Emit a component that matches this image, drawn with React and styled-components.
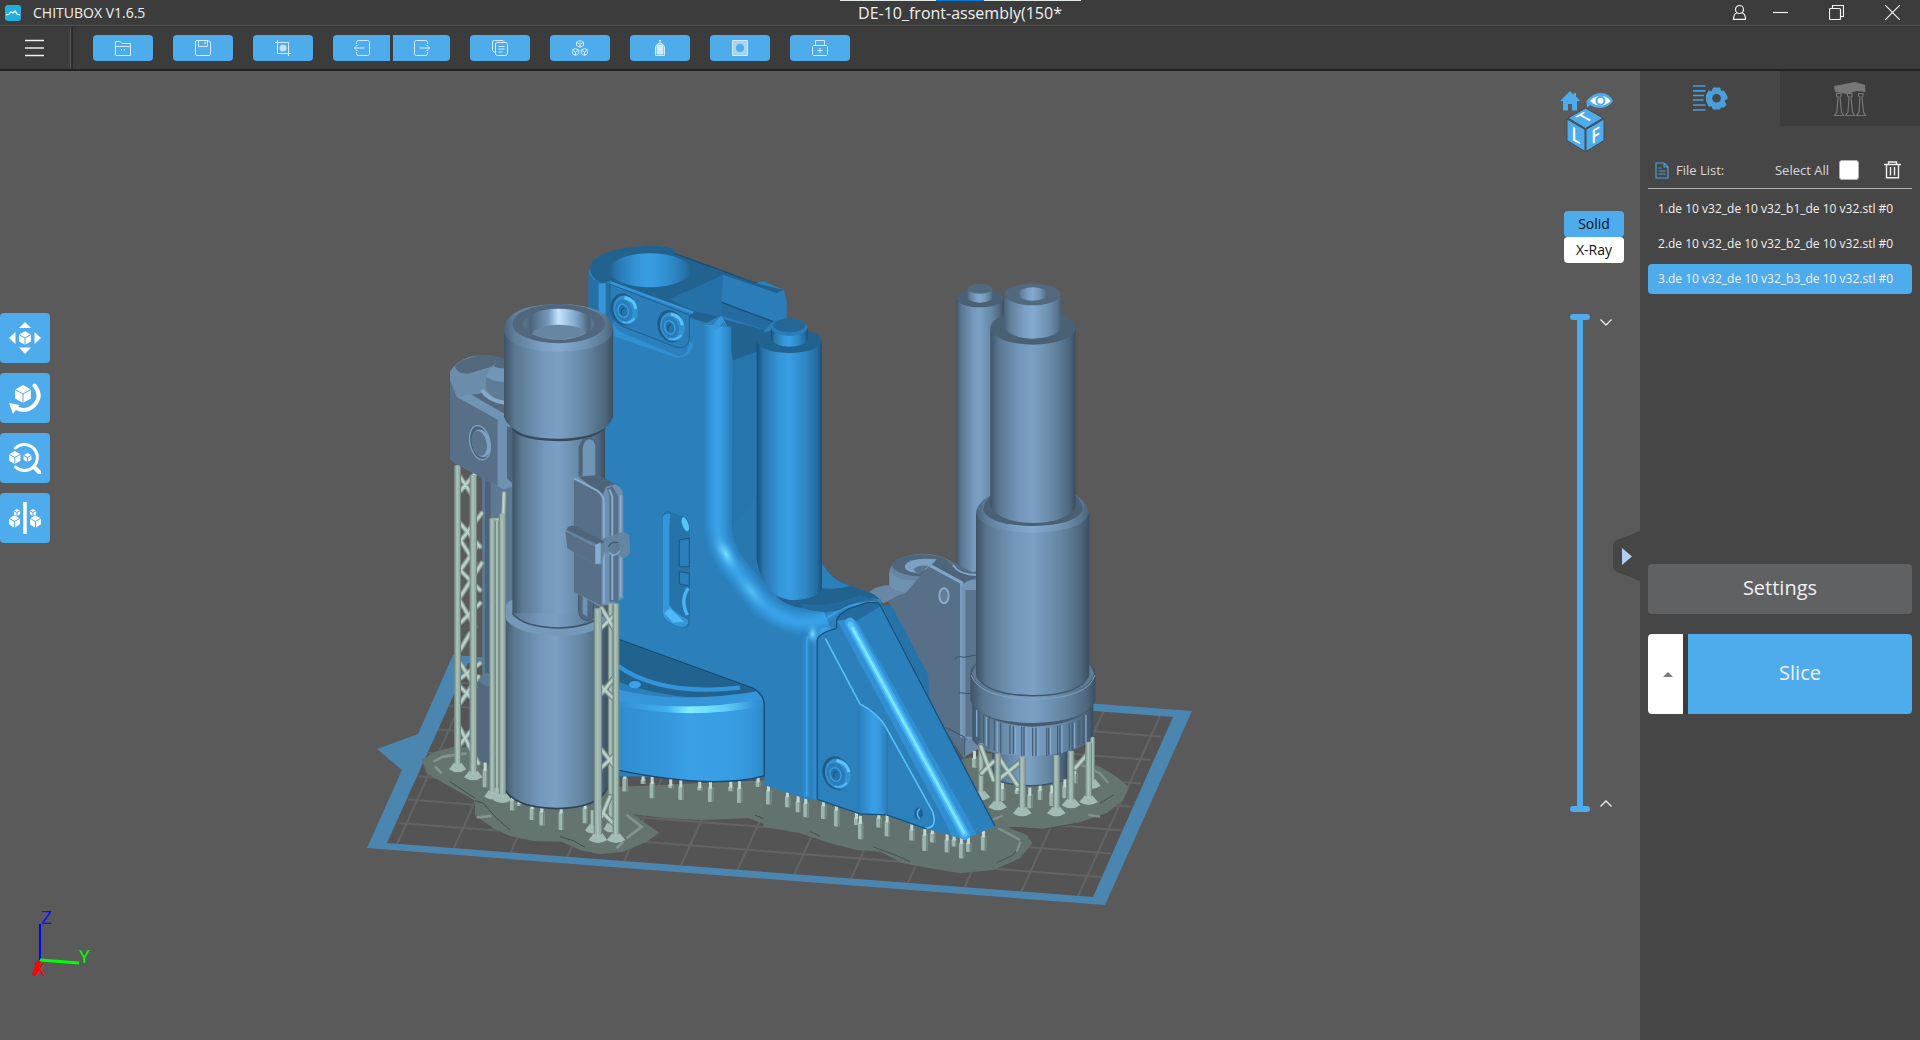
import { Fragment } from "react";
import styled, { createGlobalStyle } from "styled-components";

function App() {
  return (
    <>
      <GlobalStyle />
      <Window>
        <TitleBar />
        <ToolBar />
        <Main>
          <Viewport>
            <Scene />
            <Axes />
            <ToolColumn>
              {sideTools.map((tool) => (
                <SideButton key={tool.name} aria-label={tool.name}>
                  {tool.icon}
                </SideButton>
              ))}
            </ToolColumn>
            <ViewColumn>
              <ViewCube />
              <RenderModes>
                <ModeButton $active>Solid</ModeButton>
                <ModeButton>X-Ray</ModeButton>
              </RenderModes>
              <LayerSlider />
            </ViewColumn>
            <CollapseButton aria-label="Collapse panel">
              <svg width="27" height="50" viewBox="0 0 27 50">
                <path d="M27 0L4 9Q0 11 0 15V35Q0 39 4 41L27 50Z" fill="#464646" />
                <path d="M9 17L19 25.500L9 34Z" fill="#b0cef0" />
              </svg>
            </CollapseButton>
          </Viewport>
          <SidePanel />
        </Main>
      </Window>
    </>
  );
}

export default App;

function TitleBar() {
  return (
    <TitleWrap>
      <TaskStrip />
      <Brand>
        <svg width="16" height="16" viewBox="0 0 16 16">
          <rect width="16" height="16" rx="3" fill="#1fb0dc" />
          <path d="M1 10l3-1 2-2 2 1 2-2 2 3 3 1" fill="none" stroke="#fff" strokeWidth="1.300" />
        </svg>
        <span>CHITUBOX V1.6.5</span>
      </Brand>
      <FileName>DE-10_front-assembly(150*</FileName>
      <WindowButtons>
        <WindowButton aria-label="Account">
          <svg width="15" height="15" viewBox="0 0 15 15">
            <circle cx="7.500" cy="4.500" r="4" />
            <path d="M4.800 7.800Q1.500 9 1.500 14.300H13.500Q13.500 9 10.200 7.800" />
          </svg>
        </WindowButton>
        <WindowButton aria-label="Minimize">
          <svg width="15" height="15" viewBox="0 0 15 15">
            <path d="M0 7.500H15" />
          </svg>
        </WindowButton>
        <WindowButton aria-label="Restore">
          <svg width="15" height="15" viewBox="0 0 15 15">
            <rect x=".5" y="3.500" width="11" height="11" rx="1" />
            <path d="M3.500 3.500V.5H14.500V11.500H11.500" />
          </svg>
        </WindowButton>
        <WindowButton aria-label="Close">
          <svg width="15" height="15" viewBox="0 0 15 15">
            <path d="M0 0L15 15M15 0L0 15" />
          </svg>
        </WindowButton>
      </WindowButtons>
    </TitleWrap>
  );
}

function ToolBar() {
  return (
    <ToolWrap>
      <MenuButton aria-label="Menu">
        <svg width="19" height="18" viewBox="0 0 19 18">
          <path d="M0 1.500H19M0 9H19M0 16.500H19" stroke="#eee" strokeWidth="1.500" />
        </svg>
      </MenuButton>
      <ToolGroup>
        {toolButtons.map((group, index) => (
          <ToolPair key={index}>
            {group.map((tool) => (
              <ToolButton key={tool.name} aria-label={tool.name} $half={group.length > 1}>
                {tool.icon}
              </ToolButton>
            ))}
          </ToolPair>
        ))}
      </ToolGroup>
    </ToolWrap>
  );
}

function ViewCube() {
  return (
    <svg width="54" height="62" viewBox="0 0 54 62" role="img" aria-label="View cube">
      <path d="M10 0L0 10H3V19.500H8V13H12V19.500H17V10H20.500L16 5.500V2H13.500V3.500Z" fill="#4eabec" />
      <path d="M26.500 10Q33 2 41 2T53 10Q48 17 40.500 17Q34 17 30 14L27 17Z" fill="#4eabec" />
      <path d="M30 10Q34 5 40.500 5T50.500 10Q46 14.500 40.500 14.500T30 10Z" fill="#fff" />
      <circle cx="40.500" cy="9.800" r="4" fill="#fff" stroke="#4eabec" strokeWidth="2" />
      <g fill="#4eabec" stroke="#454b50" strokeWidth="1">
        <path d="M25.500 17L43 27L25.500 37.500L8 27Z" />
        <path d="M7 28L25 38.500V60.500L7 49.500Z" />
        <path d="M44 28L26 38.500V60.500L44 49.500Z" />
      </g>
      <CubeText transform="matrix(.8 -.46 .8 .46 30 29.500)" textAnchor="middle">
        T
      </CubeText>
      <CubeText transform="matrix(.86 .5 0 1 16 51)" textAnchor="middle">
        L
      </CubeText>
      <CubeText transform="matrix(.86 -.5 0 1 35.500 51)" textAnchor="middle">
        F
      </CubeText>
    </svg>
  );
}

function LayerSlider() {
  return (
    <SliderWrap>
      <SliderStack>
        <Range type="range" aria-label="Top layer" defaultValue="100" />
        <Range type="range" aria-label="Bottom layer" defaultValue="0" />
      </SliderStack>
      <StepButtons>
        <PlainButton aria-label="Layer down">
          <svg width="12" height="7" viewBox="0 0 12 7">
            <path d="M.5.5L6 6L11.500.5" fill="none" stroke="#eee" strokeWidth="1.300" />
          </svg>
        </PlainButton>
        <PlainButton aria-label="Layer up">
          <svg width="12" height="7" viewBox="0 0 12 7">
            <path d="M.5 6.500L6 1L11.500 6.500" fill="none" stroke="#eee" strokeWidth="1.300" />
          </svg>
        </PlainButton>
      </StepButtons>
    </SliderWrap>
  );
}

function SidePanel() {
  return (
    <Panel>
      <Tabs>
        <Tab $active aria-label="Slice settings">
          <svg width="35" height="27" viewBox="0 0 35 27">
            <path d="M0 1H12.500M0 5.800H12.500M0 10.500H11M0 15H10.500M0 20H12.500M0 25H12.500" stroke="#4a9fda" strokeWidth="1.700" />
            <path
              d="M20 2.500H27L28.300 6L31 5.500L34.500 11.500V14L31.500 15.500L33.500 20L31 22.500H28L27 24.500H20L18.500 21.500H15.500L13 15.500V10L15.500 5.500L18.800 6Z"
              fill="#4a9fda"
            />
            <circle cx="23.500" cy="13.200" r="4.300" fill="#464646" />
          </svg>
        </Tab>
        <Tab aria-label="Supports">
          <svg width="34" height="36" viewBox="0 0 34 36">
            <path d="M1 5L22 1L32 4L32.500 11L24 10L14 13L2 11Z" fill="#777" />
            <path
              d="M3.500 12.500H8V15L7 16L8.500 31L10.500 34.500H1.500L4 31L5 16L3.500 15ZM14.500 12.500H19V15L18 16L19.500 31L21.500 34.500H12.500L15 31L16 16L14.500 15ZM25.500 12.500H30V15L29 16L30.500 31L32.500 34.500H23.500L26 31L27 16L25.500 15Z"
              fill="none"
              stroke="#777"
              strokeWidth="1.200"
            />
          </svg>
        </Tab>
      </Tabs>
      <PanelBody>
        <ListHeader>
          <svg width="14" height="17" viewBox="0 0 14 17" fill="none" stroke="#4a9fda" strokeWidth="1.200">
            <path d="M1 1H9L13 5V16H1ZM9 1V5H13M3.500 6H6.500M3.500 9H10.500M3.500 12H10.500" />
          </svg>
          <ListTitle>File List:</ListTitle>
          <SelectAll>
            Select All
            <input type="checkbox" />
          </SelectAll>
          <PlainButton aria-label="Delete">
            <svg width="17" height="18" viewBox="0 0 17 18" fill="none" stroke="#eee" strokeWidth="1.400">
              <path d="M0 3.500H17M4.500 3V1H12.500V3M2.500 4V16.800H14.500V4M6.500 6V14.500M10.500 6V14.500" />
            </svg>
          </PlainButton>
        </ListHeader>
        <FileList>
          {files.map((file, index) => (
            <FileRow key={file} $active={index === 2}>
              {index + 1}.{file}
            </FileRow>
          ))}
        </FileList>
        <SettingsButton>Settings</SettingsButton>
        <SliceGroup>
          <SliceMore aria-label="Slice options">
            <svg width="10" height="5" viewBox="0 0 10 5">
              <path d="M0 5L5 0L10 5Z" fill="#777" />
            </svg>
          </SliceMore>
          <SliceButton>Slice</SliceButton>
        </SliceGroup>
      </PanelBody>
    </Panel>
  );
}

function Axes() {
  return (
    <AxisMark width="80" height="90" viewBox="0 0 80 90">
      <path d="M20 24V60" stroke="#00f" strokeWidth="2" />
      <path d="M20 60L59 63" stroke="#0f0" strokeWidth="3" />
      <path d="M19 61L14 75" stroke="#f00" strokeWidth="4" />
      <text x="21" y="24" fill="#1010ff">
        Z
      </text>
      <text x="59" y="63" fill="#0f0">
        Y
      </text>
      <text x="14" y="76" fill="#f00">
        X
      </text>
    </AxisMark>
  );
}

/* ---- model scene ---- */

function Scene() {
  return (
    <SceneSvg viewBox="0 71 1640 969" role="img" aria-label="Build plate">
      <defs>
        <Shade id="grey" stops={["#3f5366", "#5a7791", "#7398bb", "#7ba0c3", "#6486a3", "#4d667c", "#3b4e5f"]} />
        <Shade id="greyTop" stops={["#4c637a", "#5f7e9a", "#7ba0c5", "#84aad0", "#7094b4", "#5a7690", "#4a6176"]} />
        <Shade id="blue" stops={["#164e79", "#2975ac", "#3596da", "#389ee3", "#2f87c4", "#246a9d", "#1a4e76"]} />
        <Shade id="hole" stops={["#22628f", "#2878b0", "#3596da", "#389ee3", "#2f8bcb", "#2672a8", "#22628f"]} />
        <Shade id="bore" stops={["#5b7790", "#4d647a", "#7498bb", "#c4e4ff", "#7ca4c8", "#4d647a", "#628099"]} />
        <Shade id="drum" stops={["#2f8bcb", "#3190d2", "#3596da", "#3aa1e7", "#389ee3", "#3395d9", "#2d86c4"]} />
        <Shade id="ridge" stops={["#2a7db8", "#2d85c3", "#3596da", "#3aa1e7", "#3595d8", "#2c80bc", "#2672a8"]} />
        <Shade id="glint" stops={["#2f8bcb", "#3596da", "#42b0f2", "#82eeff", "#60cefc", "#3596da", "#2f8bcb"]} />
        <radialGradient id="spot">
          <stop offset="0" stopColor="#78e2ff" />
          <stop offset="1" stopColor="#3aa1e7" stopOpacity="0" />
        </radialGradient>
      </defs>
      <Plate />
      <Rafts />
      <RightPart />
      <BluePart />
      <LeftPart />
    </SceneSvg>
  );
}

function Shade({ id, stops }) {
  const offsets = [0, 0.1, 0.35, 0.5, 0.75, 0.93, 1];
  return (
    <linearGradient id={id}>
      {stops.map((color, index) => (
        <stop key={index} offset={offsets[index]} stopColor={color} />
      ))}
    </linearGradient>
  );
}

function Plate() {
  return (
    <g>
      <path d="M387 843L468 663L1173 717L1093 897Z" fill="#545454" />
      <g stroke="#646464" strokeWidth="2">
        {Array.from({ length: 13 }, (_, k) => (
          <path key={k} d={`M${397 + k * 56.75} ${844 + k * 4.35}L${479 + k * 56.75} ${664 + k * 4.35}`} />
        ))}
        {Array.from({ length: 7 }, (_, k) => (
          <path key={k} d={`M${398 + k * 10} ${823 - k * 23.4}L${1101 + k * 10} ${877 - k * 23.4}`} />
        ))}
      </g>
      <path
        fillRule="evenodd"
        fill="#4b86b0"
        d="M367 848L402 770L377 749L418 734L453 655L1192 711L1105 905ZM387 843L1093 897L1173 717L468 663Z"
      />
    </g>
  );
}

function Rafts() {
  return (
    <>
      <g transform="translate(360 540) scale(.3333)">
        <path d="M185 660L225 635L280 620L400 625L640 700L780 740L1230 720L1230 858L1165 835L1020 840L920 835L820 822L850 845L898 878L860 905L790 935L720 943L660 930L605 905L520 903L450 888L400 865L345 825V782L270 740L200 700Z" fill="#64746f" />
        <path d="M345 782L370 790L410 835L450 870M600 890L640 902L675 922M270 725L345 775M1185 825L1215 838" stroke="#3f4c49" strokeWidth="3" fill="none" />
        <path d="M220 665L250 650L320 640M225 680L245 700M350 832L395 828M800 825L845 860L800 895M770 925L790 905" stroke="#84958f" strokeWidth="8" fill="none" />
      </g>
      <g transform="translate(780 540) scale(.3333)">
        <path d="M540 660L620 640L900 660L960 680L1010 710L1047 742L1030 780L980 820L890 850L790 868L700 862L560 850Z" fill="#64746f" />
        <path d="M-50 740L560 700L690 865L740 885L757 910L720 955L640 990L540 1000L450 985L370 970L300 935L230 930L150 910L60 880L-50 860Z" fill="#62726e" />
        <path d="M90 875L120 888M278 920L345 945L390 965M650 968L700 945L722 910M700 862L790 868L890 850M960 790L1000 765" stroke="#45534f" strokeWidth="3" fill="none" />
        <path d="M655 865L720 900M710 935L722 905M905 675L960 700L985 730M925 825L960 830M640 838L668 828" stroke="#80918b" strokeWidth="7" fill="none" />
      </g>
    </>
  );
}

function Pins({ items }) {
  return items.map(([x, y, h]) => (
    <Fragment key={`${x}-${y}`}>
      <rect x={x - 8} y={y + 8} width="16" height={h - 8} rx="3" fill="#9db5af" />
      <rect x={x + 3} y={y + 8} width="5" height={h - 8} fill="#6f847e" />
      <rect x={x - 5} y={y - 12} width="9" height="24" fill="#c3d8d2" />
    </Fragment>
  ));
}

function Post({ x, top, bottom, wide = 18, cone = 28 }) {
  const half = wide / 2 + 1;
  return (
    <>
      <path d={`M${x - half} ${bottom - 30}L${x - cone} ${bottom - 8}Q${x} ${bottom + 10} ${x + cone} ${bottom - 8}L${x + half} ${bottom - 30}Z`} fill="#a3bbb5" />
      <rect x={x - half} y={top} width={half * 2} height={bottom - top - 22} rx="5" fill="#98b0a9" />
      <path d={`M${x - half + 1} ${top + 4}V${bottom - 26}M${x + half - 1} ${top + 4}V${bottom - 26}`} stroke="#70837c" strokeWidth="3" />
      <path d={`M${x - 1} ${top + 4}V${bottom - 16}`} stroke="#a9c2bb" strokeWidth="5" />
    </>
  );
}

function Braces({ d }) {
  return (
    <g fill="none" strokeLinecap="round">
      <path d={d} stroke="#6d807a" strokeWidth="17" />
      <path d={d} stroke="#a2bab3" strokeWidth="11" />
      <path d={d} stroke="#c2d8d0" strokeWidth="4" />
    </g>
  );
}

function RightPart() {
  return (
    <>
      <g transform="translate(800 230) scale(.3333)">
        <path d="M469 205V1015Q500 1035 540 1035H611V205Z" fill="url(#grey)" />
        <ellipse cx="540" cy="205" rx="71" ry="27" fill="#4a6074" />
        <path d="M502 178V208Q540 228 578 208V178Z" fill="url(#greyTop)" />
        <ellipse cx="540" cy="176" rx="37" ry="15" fill="#51687d" />
      </g>
      <g transform="translate(780 540) scale(.3333)">
        <path d="M262 158Q290 135 330 135L400 160L600 90V620L550 655L440 480L330 190Z" fill="#587087" />
        <path d="M270 155Q290 137 330 136L385 160Q360 160 340 175L310 190Z" fill="#6888a5" />
        <path d="M328 90V140Q350 160 385 155L445 85Q480 60 517 65Q480 42 425 41Q345 45 328 90Z" fill="#6585a2" />
        <ellipse cx="425" cy="76" rx="88" ry="33" fill="#4f677d" />
        <path d="M375 75Q395 50 470 58L445 85L410 100L390 95Q372 90 375 75Z" fill="#7ca1c3" />
        <path d="M400 87Q420 72 445 78L415 105Z" fill="#59748d" />
        <path d="M328 95Q355 125 410 120L385 155Q340 160 328 135Z" fill="#6e91b0" />
        <path d="M378 158L450 75L517 65L600 108L600 625L550 650L430 460L345 200Z" fill="#587087" />
        <path d="M450 75L495 65L588 110L545 130Z" fill="#4d647a" />
        <path d="M450 76L545 128V592" stroke="#7fa4c8" strokeWidth="9" fill="none" />
        <path d="M544 140Q555 120 590 118V610L555 595L544 590Z" fill="#7396b7" />
        <path d="M556 150H590V590H556Z" fill="#5b758d" />
        <path d="M525 360Q530 345 550 352L590 345M537 458L580 462M497 562L555 592V645" stroke="#3d5062" strokeWidth="3" fill="none" />
        <path d="M556 600L600 592V625L555 648Z" fill="#6a89a6" />
        <ellipse cx="492" cy="167" rx="14" ry="23" fill="#647f98" stroke="#86abce" strokeWidth="6" />
        <path d="M518 75Q540 105 590 105" stroke="#83a8cb" strokeWidth="6" fill="none" />
        <Pins items={[[584, 645, 38], [885, 690, 40], [668, 735, 48], [712, 740, 22], [750, 755, 50], [781, 740, 40], [816, 748, 50], [855, 730, 45]]} />
        <path d="M637 630V720Q750 755 862 715V620Z" fill="url(#grey)" />
        <path d="M650 722Q750 752 850 722" stroke="#3c506a" strokeWidth="4" fill="none" />
        <path d="M577 490V600Q600 630 640 638Q760 660 870 632Q920 620 940 590V490Z" fill="url(#grey)" />
        <path
          d="M583 505V585M597 515V600M611 525V615M627 532V625M643 540V632M662 548V640M690 555V642M700 558V642M725 560V647M732 560V647M758 563V648M768 563V648M800 563V648M806 563V645M833 558V643M840 556V643M868 550V632M877 548V630M897 540V615M910 530V610M928 515V600"
          stroke="#46607a"
          strokeWidth="4"
        />
        <path d="M590 510V590M619 530V618M652 545V636M707 562V642M738 562V647M774 563V648M812 563V645M846 556V640M884 548V625M918 525V605" stroke="#83a8ca" strokeWidth="4" />
        <path d="M575 490Q620 555 760 560Q900 555 943 490V470H575Z" fill="#465b6f" />
      </g>
      <g transform="translate(740 540) scale(.3333)">
        {/* collar sits behind the wide barrel */}
        <path d="M691 400V480Q720 548 880 549Q1040 545 1067 480V400Q1064 380 1050 370H708Q694 380 691 400Z" fill="url(#grey)" />
        <path d="M695 400Q710 465 880 470Q1050 465 1063 400L1050 375H708Z" fill="#5e7a94" />
        <path d="M693 405Q720 475 880 478Q1045 475 1065 405" stroke="#7ea2c5" strokeWidth="3" fill="none" />
      </g>
      <g transform="translate(800 230) scale(.3333)">
        <path d="M528 850V1335Q560 1395 698 1396Q840 1395 868 1335V850Z" fill="url(#grey)" />
        <path d="M530 1338Q560 1396 698 1397Q840 1396 866 1338" stroke="#40576c" strokeWidth="4" fill="none" />
        <path d="M528 850Q530 820 571 795H827Q866 820 868 850Q850 905 698 908Q550 905 528 850Z" fill="url(#greyTop)" />
        <path d="M550 840Q553 812 571 798H827Q845 812 848 840Q830 885 698 888Q565 885 550 840Z" fill="#4a6074" />
        <path d="M571 295V830Q600 878 698 879Q800 878 827 830V295Z" fill="url(#grey)" />
        <ellipse cx="699" cy="293" rx="128" ry="51" fill="#4a6074" />
        <path d="M613 200V295Q635 325 698 326Q765 325 783 295V200Z" fill="url(#greyTop)" />
        <ellipse cx="698" cy="193" rx="84" ry="33" fill="#51687d" />
        <ellipse cx="698" cy="192" rx="44" ry="20" fill="url(#greyTop)" />
      </g>
      <g transform="translate(780 540) scale(.3333)">
        <Post x={603} top={610} bottom={780} wide={14} />
        <Post x={938} top={590} bottom={745} wide={10} cone={24} />
        <Braces d="M603 620L640 720M655 650L712 735M722 665L660 715M605 700L640 665M925 640L885 685" />
        <Post x={653} top={640} bottom={810} wide={15} />
        <Post x={727} top={650} bottom={828} wide={17} />
        <Post x={829} top={645} bottom={828} wide={17} />
        <Post x={873} top={632} bottom={804} wide={17} />
        <Post x={926} top={605} bottom={794} wide={17} />
      </g>
    </>
  );
}

function Bolt({ x, y, rx = 36, ry = 44 }) {
  return (
    <g transform={`rotate(-18 ${x} ${y})`} fill="none">
      <ellipse cx={x - 4} cy={y - 3} rx={rx + 3} ry={ry + 5} fill="#1e5b87" />
      <ellipse cx={x} cy={y} rx={rx} ry={ry} fill="#3391d4" />
      <path d={`M${x + 8} ${y - ry + 7}Q${x + rx} ${y - 20} ${x + rx - 6} ${y + 6}`} stroke="#5cc4f8" strokeWidth="9" />
      <path d={`M${x - 20} ${y + ry - 14}Q${x} ${y + ry} ${x + 18} ${y + ry - 12}`} stroke="#4fb6f5" strokeWidth="7" />
      <ellipse cx={x - 6} cy={y} rx={rx - 11} ry={ry - 10} fill="#2a7db8" />
      <ellipse cx={x - 8} cy={y} rx={rx / 2 - 3} ry={ry / 2 - 2} fill="#2573a8" stroke="#3b9fe3" strokeWidth="4" />
      <path d={`M${x - 16} ${y + 8}Q${x - 12} ${y - 12} ${x - 2} ${y - 6}`} stroke="#184f77" strokeWidth="3" />
    </g>
  );
}

const ridgeLayers = [
  [84, "#2c82be"],
  [70, "#2e89c8"],
  [56, "#3190d1"],
  [42, "#3497db"],
  [28, "#379de2"],
  [14, "#3aa2e8"],
];

function Ridge({ d, thin = 0 }) {
  return ridgeLayers.map(([width, color]) => <path key={width} d={d} stroke={color} strokeWidth={Math.max(width - thin, 4)} fill="none" strokeLinejoin="round" />);
}

function BluePart() {
  return (
    <g transform="translate(360 230) scale(.3333)">
      <Pins
        items={[
          [795, 1635, 50], [850, 1640, 22], [877, 1650, 55], [933, 1655, 20], [963, 1660, 50], [1020, 1662, 20], [1052, 1664, 52],
          [1113, 1662, 22], [1139, 1665, 54], [1195, 1645, 26], [1226, 1672, 52], [1283, 1690, 42], [1315, 1705, 42], [1338, 1710, 52],
          [1391, 1717, 50], [1430, 1730, 60], [1490, 1755, 30], [1502, 1770, 58], [1557, 1755, 38], [1582, 1765, 55], [1656, 1790, 42],
          [1695, 1805, 58], [1718, 1800, 38], [1762, 1820, 48], [1783, 1820, 30], [1805, 1830, 56], [1826, 1830, 36], [1871, 1810, 52],
        ]}
      />
      <path
        d="M686 125Q700 55 870 47Q920 48 943 56V68L1090 125L1190 160Q1200 152 1212 154L1272 180L1280 215V330H1386V1000Q1410 1040 1440 1055L1530 1088Q1555 1100 1565 1125L1595 1128L1705 1335L1707 1400L1905 1788L1815 1828L1700 1797L1580 1755L1500 1752L1372 1708L1340 1708L1213 1665V1640L780 1640L735 1000V600L755 300L686 230Z"
        fill="#2b7fba"
      />
      {/* left column and top deck */}
      <path d="M686 125V235L760 310V160L700 150Z" fill="#2570a6" />
      <path d="M716 160H737V260L716 245Z" fill="#3596da" />
      <path d="M690 105Q720 52 870 47Q920 48 943 56V68L1190 160L1272 180L1250 190L1090 135L930 208L1100 270L1215 300L1190 365L1118 392L1105 300L1085 255L1040 278L985 262L1000 245L750 152L725 160Q685 140 690 105Z" fill="#22628f" />
      <ellipse cx="870" cy="121" rx="123" ry="51" fill="url(#hole)" />
      <path d="M930 208L1090 135L1085 262L1000 243Z" fill="#2570a6" />
      <path d="M1090 135L1250 190L1272 180L1280 215L1278 270L1240 278L1085 215Z" fill="#2a7db8" />
      <path d="M1085 215L1240 275L1215 300L1085 258Z" fill="#246c9f" />
      <path d="M1085 217L1240 275M943 70L1190 160" stroke="#1c4f76" strokeWidth="4" />
      <path d="M1118 392L1190 365V1000L1115 960Z" fill="#2675ac" />
      {/* bolt plate */}
      <path d="M750 240Q752 285 780 305L955 378Q985 380 988 330L1000 345Q985 390 945 382L765 320Z" fill="#3190d2" />
      <path d="M750 162L988 255V330Q980 360 950 352L790 290Q750 270 750 235Z" fill="#2a7db8" stroke="#20608c" strokeWidth="3" />
      <path d="M752 158L1000 248" stroke="#3596da" strokeWidth="7" />
      <Bolt x={797} y={240} />
      <Bolt x={937} y={290} />
      {/* shelf around the cylinder */}
      <path d="M1110 900Q1150 860 1190 800V1010L1235 1075L1150 1000Z" fill="#2878b0" />
      <path d="M1190 990Q1240 1120 1320 1150L1440 1165Q1480 1130 1545 1115L1560 1110Q1550 1095 1530 1088L1440 1055Q1410 1035 1386 1000L1300 1060Z" fill="#22628f" />
      <path d="M1386 1000Q1410 1040 1440 1055L1470 1068Q1420 1080 1386 1075Z" fill="#2b7fba" />
      {/* long ridge down to the shelf edge */}
      <Ridge d="M1340 1700V1240Q1345 1185 1400 1165L1440 1140Q1490 1110 1560 1125" thin={50} />
      <Ridge d="M1072 290V880Q1073 945 1110 1000L1180 1090Q1225 1150 1290 1170Q1350 1185 1400 1165" />
      <path d="M1030 285L1060 285Q1075 262 1085 257L1105 295L1090 275L1070 300Z" fill="#3596da" />
      <path d="M1320 1120Q1380 1130 1440 1115L1500 1095L1555 1112Q1490 1110 1440 1140Q1390 1155 1330 1135Z" fill="#246a9b" />
      <ellipse cx="1098" cy="972" rx="28" ry="68" transform="rotate(-30 1098 972)" fill="url(#spot)" />
      <ellipse cx="1175" cy="1085" rx="28" ry="70" transform="rotate(-40 1175 1085)" fill="url(#spot)" opacity=".5" />
      <path d="M1350 1705V1240Q1355 1205 1395 1190L1430 1195Q1385 1205 1374 1235V1710Z" fill="url(#ridge)" />
      <ellipse cx="1358" cy="1212" rx="20" ry="34" fill="url(#spot)" />
      {/* cylinder */}
      <path d="M1190 333V985Q1205 1105 1300 1111Q1375 1108 1386 1075V333Z" fill="url(#blue)" />
      <ellipse cx="1288" cy="332" rx="98" ry="37" fill="#22628f" />
      <path d="M1233 295V330Q1250 350 1288 350Q1330 350 1343 330V295Z" fill="url(#blue)" />
      <ellipse cx="1288" cy="293" rx="54" ry="25" fill="#2a7cb6" />
      <ellipse cx="1288" cy="286" rx="48" ry="21" fill="#246799" />
      {/* slot */}
      <path d="M906 865Q908 843 925 843L975 862Q990 875 990 890V1180Q985 1198 965 1193L930 1180Q908 1165 906 1145Z" fill="#2573a8" />
      <path d="M908 865Q910 848 932 852Q928 870 928 890V1125Q945 1150 985 1170Q985 1195 960 1190Q908 1175 908 1145Z" fill="#3596da" />
      <path d="M912 1150L930 1135L972 1175L940 1178Z" fill="#4eb9f8" />
      <path d="M958 930L988 925V1010H958ZM958 1025L988 1030V1068L958 1062Z" fill="#2b80bc" stroke="#1c5681" strokeWidth="3" />
      <ellipse cx="976" cy="883" rx="9" ry="22" transform="rotate(-20 976 883)" fill="#58c6fb" />
      <path d="M985 1075Q960 1110 982 1155" stroke="#4cb4f2" strokeWidth="10" fill="none" />
      {/* drum */}
      <path d="M760 1225L1180 1372Q1213 1390 1213 1425V1640Q1060 1675 760 1620Z" fill="#2b7fba" />
      <path d="M760 1225L1180 1378L1195 1400Q960 1425 760 1350Z" fill="#22628f" />
      <path d="M770 1305Q900 1400 1140 1373" stroke="#3494d8" strokeWidth="13" fill="none" />
      <path d="M760 1222L1180 1375" stroke="#174b70" strokeWidth="4" />
      <ellipse cx="825" cy="1364" rx="18" ry="11" fill="#3ba2e8" />
      <path d="M760 1375Q940 1425 1190 1385L1207 1405L1213 1450Q980 1480 760 1430Z" fill="#3596da" />
      <path d="M765 1410Q980 1450 1205 1408L1210 1430Q980 1475 765 1430Z" fill="url(#glint)" />
      <path d="M760 1422Q980 1475 1213 1428V1640Q1060 1675 760 1620Z" fill="url(#drum)" />
      <path d="M770 1620Q1060 1680 1213 1638V1425Q1213 1395 1180 1375" stroke="#154a72" strokeWidth="4" fill="none" />
      {/* foot panel */}
      <path d="M1374 1215L1395 1215L1500 1418Q1570 1470 1600 1520L1720 1750Q1735 1800 1690 1797L1580 1755L1500 1752L1372 1708Z" fill="#2c80bc" />
      <path d="M1495 1425Q1560 1455 1584 1500V1755L1495 1750Z" fill="url(#ridge)" />
      <path d="M1565 1125L1595 1128L1705 1335L1707 1400Z" fill="#2573a8" />
      <path d="M1430 1172Q1435 1150 1470 1135L1520 1118H1555L1565 1128L1905 1788L1815 1828L1785 1815Z" fill="#2b7fba" />
      <path d="M1430 1172Q1435 1150 1470 1135L1520 1118H1555L1562 1128L1490 1172Z" fill="#246a9d" />
      <path d="M1432 1172Q1480 1160 1495 1180L1850 1812L1815 1828L1775 1818L1750 1765Z" fill="#3190d2" />
      <path d="M1470 1178L1815 1815" stroke="#3ea6ec" strokeWidth="30" strokeLinecap="round" />
      <path d="M1472 1184L1814 1812" stroke="#58c2fa" strokeWidth="18" strokeLinecap="round" />
      <path d="M1478 1195L1812 1808" stroke="#7ce6ff" strokeWidth="8" strokeLinecap="round" />
      <path d="M1430 1195V1172Q1435 1150 1470 1135L1520 1118H1555L1562 1128L1905 1788M1372 1708V1230Q1375 1210 1430 1195" stroke="#1a5179" strokeWidth="4" fill="none" />
      <path d="M1396 1225L1500 1422Q1555 1450 1580 1495L1718 1745Q1735 1795 1695 1795" stroke="#55bff8" strokeWidth="5" fill="none" />
      <path d="M1372 1708L1500 1752L1580 1755L1700 1797" stroke="#17527d" strokeWidth="4" fill="none" />
      <Bolt x={1434} y={1631} rx={38} ry={46} />
      <ellipse cx="1676" cy="1751" rx="13" ry="18" fill="#206090" />
      <path d="M1680 1736Q1664 1750 1680 1768" stroke="#4fb6f5" strokeWidth="5" fill="none" />
    </g>
  );
}

function LeftPart() {
  return (
    <g transform="translate(360 230) scale(.3333)">
      {/* rear rod and block */}
      <path d="M367 740H460V1600L352 1590V1340L367 1335Z" fill="#5d7a95" />
      <path d="M352 1345Q365 1370 400 1372V1610Q365 1600 352 1585Z" fill="#52697f" />
      <path d="M375 740H392V1330H375Z" fill="#4d6379" />
      <Braces d="M293 730L340 800M355 720L295 790M300 880L360 950M365 850L300 935M295 920L345 1000M350 950L295 1030M300 1020L360 1080M365 1000L295 1110M295 1105L345 1190M360 1120L300 1180M330 1210L300 1260M295 1290L345 1370M360 1300L295 1350M295 1365L330 1400M355 1340L300 1420M295 1485L350 1590M335 1500L295 1550M325 1545L355 1600" />
      <Post x={293} top={705} bottom={1626} wide={17} cone={26} />
      <Post x={340} top={735} bottom={1650} wide={19} cone={28} />
      <path d="M270 425Q290 392 330 380Q390 370 434 388V560L457 560V770L432 778L285 700L270 685Z" fill="#6b8cab" />
      <path d="M285 410Q300 385 370 376Q410 375 434 388L400 408L330 430Q295 435 285 410Z" fill="#53697e" />
      <path d="M378 440L400 405Q410 395 434 390V530L378 490Z" fill="#7396b8" />
      <path d="M400 408Q410 395 434 388V415Q410 415 400 408Z" fill="#53697e" />
      <path d="M378 440Q395 455 434 455V515Q400 510 378 480Z" fill="#5f7c97" />
      <path d="M366 490Q400 520 434 515V560L300 500Z" fill="#52697f" />
      <path d="M366 480Q385 512 434 518" stroke="#84a9ca" strokeWidth="12" fill="none" />
      <path d="M270 450L290 500L415 568V768L285 700L270 685Z" fill="#587087" />
      <path d="M290 500L330 492L440 555L415 570Z" fill="#7094b4" />
      <path d="M413 570L440 555L457 600V765L430 778L413 768Z" fill="#6f92b3" />
      <path d="M441 590H457V760L441 745Z" fill="#506579" />
      <ellipse cx="360" cy="638" rx="30" ry="52" transform="rotate(-12 360 638)" fill="#4b6177" stroke="#7ca0c2" strokeWidth="4" />
      <ellipse cx="364" cy="640" rx="27" ry="42" transform="rotate(-12 364 640)" fill="#7ea2c5" />
      <ellipse cx="358" cy="640" rx="22" ry="38" transform="rotate(-12 358 640)" fill="#5b748c" />
      <Pins items={[[376, 1610, 62], [458, 1700, 42], [478, 1710, 18], [517, 1725, 45], [546, 1735, 52], [604, 1738, 62], [676, 1725, 55]]} />
      {/* neck, base and cap */}
      <path d="M457 590V1180L735 1180V590Z" fill="url(#grey)" />
      <path d="M429 1150V1670Q460 1732 590 1735Q720 1733 745 1670V1150Z" fill="url(#grey)" />
      <path d="M431 1672Q460 1734 590 1736Q720 1734 743 1672" stroke="#30425a" strokeWidth="5" fill="none" />
      <path d="M429 1155Q430 1120 457 1110V1150Q490 1192 596 1193Q700 1190 735 1150L745 1160Q720 1218 590 1217Q460 1215 429 1155Z" fill="#7499bb" />
      <path d="M457 1150Q490 1192 596 1194Q690 1192 735 1150" stroke="#40556a" strokeWidth="5" fill="none" />
      <path d="M457 595Q480 628 596 630Q700 628 735 592" stroke="#364a5d" strokeWidth="7" fill="none" />
      <path d="M432 300V560Q450 622 596 624Q742 622 759 560V300Z" fill="url(#grey)" />
      <path d="M432 300Q435 225 596 222Q755 225 759 300Q750 362 596 365Q440 362 432 300Z" fill="url(#greyTop)" />
      <ellipse cx="596" cy="281" rx="139" ry="59" fill="#50677d" />
      <ellipse cx="596" cy="282" rx="106" ry="46" fill="url(#bore)" />
      <path d="M515 312Q530 286 596 284Q662 286 680 310Q650 327 596 328Q540 327 515 312Z" fill="#6885a1" />
      {/* bracket */}
      <path d="M656 650Q665 622 688 622Q710 625 710 650V750H656Z" fill="#4f6579" />
      <path d="M668 655Q672 628 690 628Q706 632 706 655V745H668Z" fill="#7195b5" />
      <path d="M656 1090H700V1160Q690 1178 668 1168Q656 1160 656 1140Z" fill="#54697f" stroke="#3f5468" strokeWidth="3" />
      <path d="M668 1095H682V1160L668 1150Z" fill="#7094b4" />
      <path d="M642 745L655 738L715 740L770 765Q790 775 790 800V1105L765 1118L720 1130L642 1085Z" fill="#6d90b0" />
      <path d="M655 740L715 735L768 762L738 770L728 795Z" fill="#4e6479" />
      <path d="M642 745L715 785Q725 795 725 810V1128L642 1085Z" fill="#587087" />
      <path d="M741 775L757 768L775 800V1115H748V800Z" fill="#56708a" />
      <path d="M642 745L712 782Q730 795 732 815V1120M748 778L757 800V1110M782 795V1100" stroke="#86abce" strokeWidth="6" fill="none" />
      <path d="M617 905Q620 885 640 885L715 930L790 905L808 915L811 970L795 985L735 965L722 1005L705 1003L622 955Z" fill="#6586a3" />
      <path d="M617 905L705 950V1002L622 955Z" fill="#587087" />
      <path d="M620 900Q625 885 645 888L735 935L715 945Z" fill="#506579" />
      <path d="M706 945L722 937V1000L706 1002Z" fill="#86acd0" />
      <ellipse cx="763" cy="955" rx="17" ry="20" fill="#5f7b96" />
      <path d="M748 968Q765 985 780 962" stroke="#82a8cb" strokeWidth="5" fill="none" />
      <path d="M745 950Q755 932 775 938" stroke="#43586c" strokeWidth="4" fill="none" />
      {/* support trusses in front */}
      <Braces d="M432 790L430 860M395 872L430 868M402 1110L430 1140M430 1335L402 1360M400 1560L430 1600M420 1585L402 1610" />
      <Post x={397} top={865} bottom={1708} wide={16} cone={24} />
      <Post x={412} top={870} bottom={1700} wide={9} cone={10} />
      <Post x={427} top={850} bottom={1718} wide={18} cone={28} />
      <Post x={752} top={1120} bottom={1806} wide={14} cone={22} />
      <Post x={697} top={1740} bottom={1810} wide={10} cone={22} />
      <Braces d="M725 1135L765 1200M765 1155L722 1195M765 1340L725 1390M725 1370L765 1410M725 1560L765 1610M765 1575L722 1615M750 1700L725 1760M725 1745L765 1785" />
      <Post x={714} top={1135} bottom={1838} wide={22} cone={28} />
      <Post x={768} top={1120} bottom={1838} wide={17} cone={28} />
    </g>
  );
}

function Cube({ x, y, size }) {
  const w = size * 0.87;
  return (
    <g transform={`translate(${x} ${y})`} strokeLinejoin="round">
      <path d={`M0 ${-size}L${w} ${-size / 2}V${size / 2}L0 ${size}L${-w} ${size / 2}V${-size / 2}Z`} fill="#fff" />
      <path d={`M${-w} ${-size / 2}L0 0L${w} ${-size / 2}M0 0V${size}`} stroke="#4eabec" fill="none" />
    </g>
  );
}

const sideTools = [
  {
    name: "Move",
    icon: (
      <svg width="32" height="32" viewBox="0 0 32 32" fill="#fff">
        <path d="M16 0L22 6H10ZM16 32L22 25.500H10ZM0 16L6.500 10V22ZM32 16L25.500 10V22Z" />
        <Cube x={16} y={16} size={6.8} />
      </svg>
    ),
  },
  {
    name: "Rotate",
    icon: (
      <svg width="32" height="32" viewBox="0 0 32 32" fill="none">
        <path d="M25.500 3.500Q34 14 25 23.500Q17 31 7 26" stroke="#fff" strokeWidth="4" strokeLinecap="round" />
        <path d="M0 21L10.500 23L4 32Z" fill="#fff" />
        <Cube x={14} y={12} size={9} />
      </svg>
    ),
  },
  {
    name: "Scale",
    icon: (
      <svg width="32" height="32" viewBox="0 0 32 32" fill="none">
        <path d="M6.500 6A13 13 0 1 1 6.500 25" stroke="#fff" strokeWidth="3" strokeLinecap="round" />
        <path d="M25 25L30.500 30.500" stroke="#fff" strokeWidth="4" strokeLinecap="round" />
        <Cube x={5.8} y={15.5} size={6.5} />
        <Cube x={18.5} y={15.5} size={4.5} />
      </svg>
    ),
  },
  {
    name: "Mirror",
    icon: (
      <svg width="32" height="32" viewBox="0 0 32 32" fill="none">
        <path d="M16 0V32" stroke="#fff" strokeWidth="3.500" />
        <Cube x={8} y={10.5} size={3.6} />
        <Cube x={24} y={10.5} size={3.6} />
        <Cube x={5.5} y={19.5} size={6.2} />
        <Cube x={26.5} y={19.5} size={6.2} />
      </svg>
    ),
  },
];

const toolButtons = [
  [{ name: "Open", icon: <Glyph d="M.5 15V1.500H5.500L7 3.500H15.500V15.500H.5M.5 6.500H15.500M6.500 9V10.500M9.500 9V10.500" /> }],
  [{ name: "Save", icon: <Glyph d="M2 .5H13L15.500 2V14Q15.500 15.500 14 15.500H2Q.5 15.500 .5 14V2Q.5.5 2 .5M3.500.5V6.500H12.500V.5M10 1.500V4.500" /> }],
  [
    {
      name: "Screenshot",
      icon: (
        <Glyph d="M0 2.500H13.500V16M2.500 0V13.500H16">
          <circle cx="8" cy="8" r="3.500" fill="#c5e3f9" stroke="none" />
        </Glyph>
      ),
    },
  ],
  [
    { name: "Undo", icon: <Glyph d="M2.500 4V2.500Q2.500.5 4.500.5H13.500Q15.500.5 15.500 2.500V13.500Q15.500 15.500 13.500 15.500H4.500Q2.500 15.500 2.500 13.500V12M10.500 8H.5M4 4.500L.5 8L4 11.500" /> },
    { name: "Redo", icon: <Glyph d="M13.500 4V2.500Q13.500.5 11.500.5H2.500Q.5.5 .5 2.500V13.500Q.5 15.500 2.500 15.500H11.500Q13.500 15.500 13.500 13.500V12M5.500 8H15.500M12 4.500L15.500 8L12 11.500" /> },
  ],
  [{ name: "Copy", icon: <Glyph d="M3.500 13L.5 10.500V2Q.5.5 2 .5H11L13 2.500M5 2.500H13.500Q15.500 2.500 15.500 4.500V13.500Q15.500 15.500 13.500 15.500H5.500Q3.500 15.500 3.500 13.500V4Q3.500 2.500 5 2.500M6.500 6.500H12.500M6.500 9H12.500M6.500 12H10.500" /> }],
  [{ name: "Arrange", icon: <Glyph d="M8 .5L11.500 2.300V5.500L8 7.300L4.500 5.500V2.300ZM4.500 2.300L8 4L11.500 2.300M8 4V7M3.500 8.500L6.800 10V13.500L3.500 15.500L.2 13.500V10ZM.2 10L3.500 12L6.800 10M3.500 12V15M12.500 8.500L15.800 10V13.500L12.500 15.500L9.200 13.500V10ZM9.200 10L12.500 12L15.800 10M12.500 12V15" /> }],
  [
    {
      name: "Resin",
      icon: (
        <Glyph d="M7 .5H9M8 1V3M6 3.500H10L12.500 6.500V15.500H3.500V6.500Z">
          <path d="M5 5H11V14H5Z" fill="#d5ebfb" />
        </Glyph>
      ),
    },
  ],
  [
    {
      name: "Hollow",
      icon: (
        <Glyph d="M.5.5H15.500V15.500H.5Z">
          <path d="M1 1H15V15H1ZM8 4A4 4 0 1 0 8 12A4 4 0 1 0 8 4Z" fill="#a6d4f6" fillRule="evenodd" stroke="none" />
        </Glyph>
      ),
    },
  ],
  [{ name: "Repair", icon: <Glyph d="M3.500 5V.5H12.500V5M1.500 5.500H14.500L15.500 6.500V14.500L14.500 15.500H1.500L.5 14.500V6.500ZM8 8V13M5.500 10.500H10.500" /> }],
];

function Glyph({ d, children }) {
  return (
    <svg width="16" height="16" viewBox="0 0 16 16" fill="none" stroke="#d5ebfb">
      {children}
      <path d={d} />
    </svg>
  );
}

const files = ["de 10 v32_de 10 v32_b1_de 10 v32.stl #0", "de 10 v32_de 10 v32_b2_de 10 v32.stl #0", "de 10 v32_de 10 v32_b3_de 10 v32.stl #0"];

const GlobalStyle = createGlobalStyle`
  * {
    box-sizing: border-box;
  }
  body {
    margin: 0;
    background: #5a5a5a;
    color: #f0f0f0;
    font-family: "Open Sans", "Noto Sans", sans-serif;
    font-size: 13px;
  }
  button {
    font: inherit;
    color: inherit;
    border: 0;
    padding: 0;
    background: none;
  }
  svg {
    display: block;
  }
`;

const Window = styled.div`
  min-height: 100vh;
  display: flex;
  flex-direction: column;
`;

const TitleWrap = styled.header`
  position: relative;
  height: 26px;
  display: grid;
  grid-template-columns: 1fr auto 1fr;
  align-items: center;
  padding: 0 20px 0 5px;
  background: #3c3c3c;
  border-bottom: 1px solid #565656;
`;

const TaskStrip = styled.div`
  position: absolute;
  top: 0;
  left: 50%;
  width: 241px;
  height: 1px;
  margin-left: -120px;
  background: linear-gradient(90deg, #e3e9e6 96px, #0078d7 96px, #0078d7 144px, #e3e9e6 144px);
`;

const Brand = styled.div`
  display: flex;
  align-items: center;
  gap: 12px;
  font-size: 14px;
  line-height: 24px;
`;

const FileName = styled.span`
  font-size: 16px;
  line-height: 24px;
  padding-left: 15px;
`;

const WindowButtons = styled.div`
  display: flex;
  justify-content: flex-end;
  gap: 41px;
`;

const WindowButton = styled.button`
  &:first-child {
    margin-right: -15px;
  }
  svg {
    fill: none;
    stroke: #f0f0f0;
    stroke-width: 1.2;
  }
`;

const ToolWrap = styled.nav`
  height: 45px;
  display: flex;
  align-items: stretch;
  background: #3c3c3c;
  border-top: 1px solid #333333;
  border-bottom: 2px solid #222222;
`;

const MenuButton = styled.button`
  width: 73px;
  padding-left: 25px;
  border-right: 2px solid #2b2b2b;
  box-shadow: inset -1px 0 #565656;
`;

const ToolGroup = styled.div`
  display: flex;
  align-items: center;
  gap: 20px;
  padding-left: 20px;
`;

const ToolPair = styled.div`
  display: flex;
  gap: 3px;
`;

const ToolButton = styled.button`
  width: ${(props) => (props.$half ? "57px" : "60px")};
  height: 26px;
  display: flex;
  align-items: center;
  justify-content: center;
  background: #4eabec;
  border-radius: 4px;
  ${(props) => props.$half && "&:first-child { border-radius: 4px 0 0 4px; } &:last-child { border-radius: 0 4px 4px 0; }"}
`;

const Main = styled.main`
  flex: 1;
  display: flex;
`;

const Viewport = styled.section`
  position: relative;
  flex: 1;
  display: flex;
  justify-content: space-between;
  background: #5a5a5a;
`;

const SceneSvg = styled.svg`
  position: absolute;
  inset: 0;
  width: 100%;
  height: 100%;
`;

const AxisMark = styled.svg`
  position: absolute;
  left: 20px;
  bottom: 50px;
  font-family: "Open Sans", sans-serif;
  font-size: 19px;
`;

const ToolColumn = styled.div`
  position: relative;
  display: flex;
  flex-direction: column;
  gap: 10px;
  padding-top: 242px;
`;

const SideButton = styled.button`
  width: 50px;
  height: 50px;
  display: flex;
  align-items: center;
  justify-content: center;
  background: #4eabec;
  border-radius: 4px;
`;

const ViewColumn = styled.div`
  position: relative;
  width: 80px;
  padding-top: 20px;
`;

const CubeText = styled.text`
  fill: #ffffff;
  font-family: "Open Sans", sans-serif;
  font-size: 19px;
  font-weight: 600;
`;

const RenderModes = styled.div`
  width: 60px;
  margin: 58px 0 0 4px;
  display: flex;
  flex-direction: column;
`;

const ModeButton = styled.button`
  height: 26px;
  color: #101010;
  font-size: 14px;
  line-height: 26px;
  border-radius: 4px;
  background: ${(props) => (props.$active ? "#4eabec" : "#ffffff")};
`;

const SliderWrap = styled.div`
  display: flex;
  gap: 10px;
  height: 498px;
  margin: 51px 0 0 10px;
`;

const SliderStack = styled.div`
  width: 20px;
  display: grid;
`;

const Range = styled.input`
  grid-area: 1 / 1;
  appearance: none;
  writing-mode: vertical-lr;
  direction: rtl;
  width: 20px;
  height: 498px;
  margin: 0;
  background: linear-gradient(90deg, transparent 7px, #4eabec 7px, #4eabec 13px, transparent 13px);
  pointer-events: none;

  &::-webkit-slider-thumb {
    appearance: none;
    pointer-events: auto;
    width: 20px;
    height: 6px;
    border-radius: 3px;
    background: #4eabec;
  }
`;

const StepButtons = styled.div`
  display: flex;
  flex-direction: column;
  justify-content: space-between;
  padding: 5px 0;
`;

const PlainButton = styled.button`
  display: block;
`;

const CollapseButton = styled.button`
  position: absolute;
  right: 0;
  top: 460px;
`;

const Panel = styled.aside`
  width: 280px;
  background: #464646;
`;

const Tabs = styled.div`
  display: flex;
  height: 55px;
`;

const Tab = styled.button`
  flex: 1;
  display: flex;
  align-items: center;
  justify-content: center;
  background: ${(props) => (props.$active ? "#464646" : "#3c3c3c")};
`;

const PanelBody = styled.div`
  padding: 26px 8px;
`;

const ListHeader = styled.div`
  height: 37px;
  display: flex;
  align-items: center;
  padding: 0 11px 0 7px;
  border-bottom: 1px solid #b4b4b4;
  color: #d8d8d8;
`;

const ListTitle = styled.span`
  flex: 1;
  padding-left: 7px;
`;

const SelectAll = styled.label`
  display: flex;
  align-items: center;
  gap: 10px;
  margin-right: 25px;

  input {
    appearance: none;
    width: 20px;
    height: 20px;
    margin: 0;
    background: #ffffff;
    border: 1px solid #b0b0b0;
    border-radius: 3px;
  }
`;

const FileList = styled.ul`
  height: 375px;
  margin: 0;
  padding: 5px 0 0;
  list-style: none;
  display: flex;
  flex-direction: column;
  gap: 5px;
`;

const FileRow = styled.li`
  height: 30px;
  padding-left: 10px;
  line-height: 30px;
  font-size: 12px;
  white-space: nowrap;
  border-radius: 4px;
  background: ${(props) => (props.$active ? "#4eabec" : "transparent")};
`;

const SettingsButton = styled.button`
  width: 100%;
  height: 50px;
  padding-bottom: 3px;
  font-size: 20px;
  background: #606163;
  border-radius: 4px;
`;

const SliceGroup = styled.div`
  display: flex;
  height: 80px;
  margin-top: 20px;
  background: #3c3c3c;
  border-radius: 4px;
`;

const SliceMore = styled.button`
  width: 35px;
  margin-right: 5px;
  padding-left: 5px;
  display: flex;
  align-items: center;
  justify-content: center;
  background: #ffffff;
  border-radius: 4px 0 0 4px;
`;

const SliceButton = styled.button`
  flex: 1;
  padding-bottom: 3px;
  font-size: 20px;
  background: #4eabec;
  border-radius: 0 4px 4px 0;
`;
